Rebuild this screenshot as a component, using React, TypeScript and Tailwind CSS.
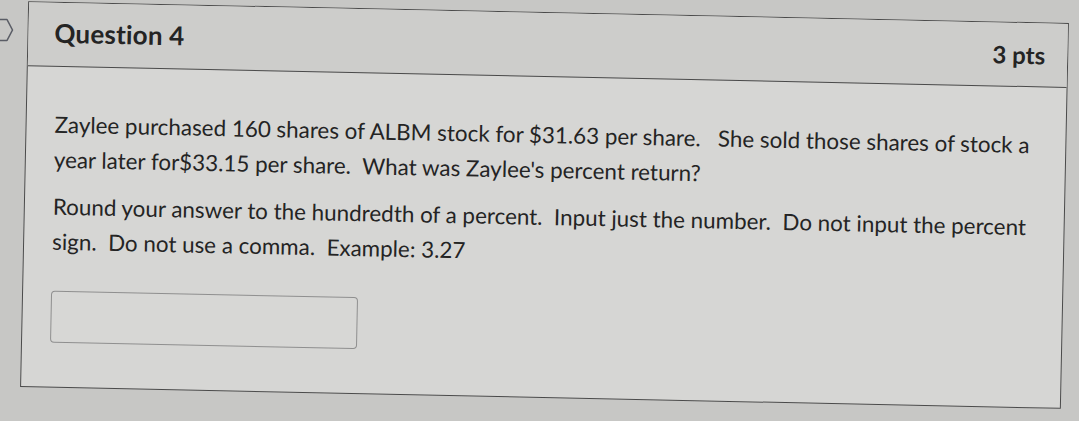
import React from "react";

export default function App() {
  return (
    <div
      className="relative w-[1079px] h-[421px] overflow-hidden bg-[#c7c7c5] text-[#242424]"
      style={{ fontFamily: "Lato, 'Open Sans', sans-serif" }}
    >
      <svg
        className="absolute left-0 top-[18px]"
        width="16"
        height="26"
        viewBox="0 0 16 26"
      >
        <path
          d="M-4 1.5 L7 1.5 L12.5 12 L7 22.5 L-4 22.5"
          fill="none"
          stroke="#5a5d66"
          strokeWidth="1.6"
          strokeLinejoin="round"
        />
      </svg>
      <div className="ml-[24px] pt-[12px]">
        <div className="w-[1041px] h-[386px] rotate-[1.2deg] border border-[#4a4a4a] bg-[#d6d6d4] flex flex-col">
          <div className="h-[64px] shrink-0 flex items-center justify-between pl-[26px] pr-[22px] border-b border-[#4a4a4a] bg-[#cdcdcb]">
            <div className="text-[26px] font-bold tracking-[0.2px] mt-[-3px]">Question 4</div>
            <div className="text-[24px] font-bold">3 pts</div>
          </div>
          <div className="pl-[28px] pr-[24px] pt-[40px] text-[22.4px] leading-[35px] whitespace-pre-wrap">
            <p>
              {"Zaylee purchased 160 shares of ALBM stock for $31.63 per share.   She sold those shares of stock a year later for$33.15 per share.  What was Zaylee's percent return?"}
            </p>
            <p className="mt-[12px]">
              {"Round your answer to the hundredth of a percent.  Input just the number.  Do not input the percent sign.  Do not use a comma.  Example: 3.27"}
            </p>
            <div className="mt-[32px] w-[307px] h-[52px] rounded-[4px] border border-[#8f8f8f] bg-[#d7d7d5]" />
          </div>
        </div>
      </div>
    </div>
  );
}
